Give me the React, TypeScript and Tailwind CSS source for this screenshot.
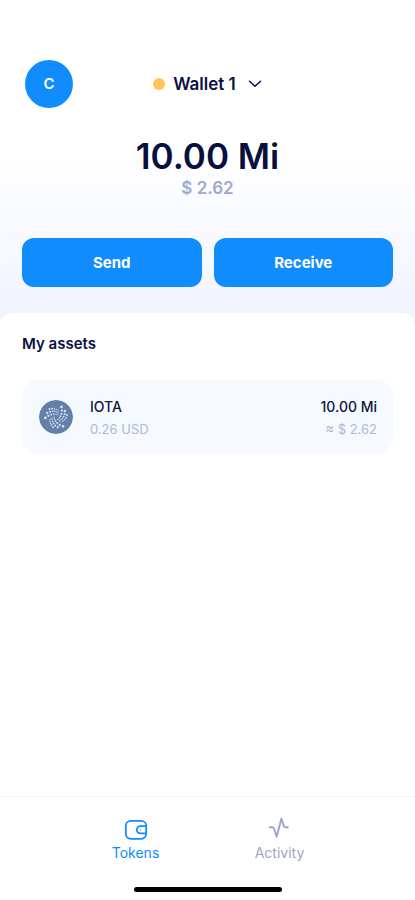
import React, { useState } from 'react';
import { SiIota } from 'react-icons/si';

type Tab = 'tokens' | 'activity';

interface Asset {
  name: string;
  price: string;
  amount: string;
  value: string;
}

const assets: Asset[] = [
  { name: 'IOTA', price: '0.26 USD', amount: '10.00 Mi', value: '≈ $ 2.62' },
];

const ChevronIcon: React.FC = () => (
  <svg width="14" height="8" viewBox="0 0 14 8" fill="none" aria-hidden="true">
    <path d="M1.5 1.2 7 6.3l5.5-5.1" stroke="currentColor" strokeWidth="1.5" strokeLinecap="round" strokeLinejoin="round" />
  </svg>
);

const WalletIcon: React.FC = () => (
  <svg width="24" height="24" viewBox="0 0 24 24" fill="none" stroke="currentColor" strokeWidth="1.8" strokeLinejoin="round" aria-hidden="true">
    <rect x="1.8" y="3.8" width="20.4" height="18" rx="5" />
    <path d="M22 9.2h-5.6a3.6 3.6 0 0 0 0 7.2H22" />
    <path d="M16.3 12.8h.5" strokeLinecap="round" strokeWidth="1" />
  </svg>
);

const ActivityIcon: React.FC = () => (
  <svg width="24" height="24" viewBox="0 0 24 24" fill="none" stroke="currentColor" strokeWidth="1.9" strokeLinecap="round" strokeLinejoin="round" aria-hidden="true">
    <path d="M1.8 10.3h2.5c.9 0 1.4.4 1.7 1.2l2.7 8.3 4.7-18.200 2.500 7.500c.3.8.9 1.200 1.700 1.200h2.200" />
  </svg>
);

const AssetRow: React.FC<{ asset: Asset }> = ({ asset }) => (
  <li className="flex items-center rounded-2xl bg-[#f6faff] px-4 py-[15px]">
    <span className="flex size-9 shrink-0 items-center justify-center rounded-full border border-[#f6faff] bg-[#6480aa] bg-clip-padding text-[#d9e3f3]">
      <SiIota size={24} aria-hidden="true" />
    </span>
    <div className="ml-4 flex-1">
      <p className="text-sm leading-6 font-medium text-[#10163c]">{asset.name}</p>
      <p className="text-[13px] leading-5 text-[#acb7d6]">{asset.price}</p>
    </div>
    <div className="text-right">
      <p className="text-sm leading-6 font-medium text-[#10163c]">{asset.amount}</p>
      <p className="text-[13px] leading-5 text-[#acb7d6]">{asset.value}</p>
    </div>
  </li>
);

export default function App() {
  const [tab, setTab] = useState<Tab>('tokens');

  const tabClass = (name: Tab) =>
    `flex w-18 flex-col items-center ${tab === name ? 'text-[#108cff]' : 'text-[#99a5ca]'}`;

  return (
    <div className="flex min-h-screen flex-col bg-white font-['Inter',sans-serif] text-[#08103f]">
      <div className="bg-linear-to-b from-white from-50% to-[#f0f4ff]">
        <header className="grid grid-cols-[48px_1fr_48px] items-center px-[25px] pt-[60px]">
          <button type="button" aria-label="Profile" className="size-12 rounded-full bg-[#108cff] text-[15px] font-semibold text-white">
            C
          </button>
          <button type="button" className="flex items-center justify-center text-[17px] leading-6 font-semibold">
            <span className="mr-2 size-3 rounded-full bg-[#ffc55a]" />
            Wallet 1
            <span className="ml-3">
              <ChevronIcon />
            </span>
          </button>
        </header>

        <div className="pt-7 text-center">
          <h1 className="text-[35px] leading-10 font-semibold">10.00 Mi</h1>
          <p className="text-[17px] leading-6 font-semibold text-[#9caad0]">$ 2.62</p>
        </div>

        <div className="grid grid-cols-2 gap-3 px-[22px] pt-[38px] pb-[26px]">
          <button type="button" className="h-[49px] rounded-xl bg-[#108cff] pt-px text-[15px] font-bold text-white">
            Send
          </button>
          <button type="button" className="h-[49px] rounded-xl bg-[#108cff] pt-px text-[15px] font-bold text-white">
            Receive
          </button>
        </div>
      </div>

      <div className="flex flex-1 flex-col bg-[#f0f4ff]">
        <main className="flex-1 rounded-t-xl bg-white px-[22px] pt-[21px]">
          <h2 className="text-[15px] leading-5 font-semibold">My assets</h2>
          <ul className="mt-[26px]">
            {assets.map((asset) => (
              <AssetRow key={asset.name} asset={asset} />
            ))}
          </ul>
        </main>
      </div>

      <footer className="border-t border-[#f4f4f6] bg-white pt-5 pb-2">
        <nav className="flex justify-center gap-18">
          <button type="button" className={tabClass('tokens')} onClick={() => setTab('tokens')}>
            <WalletIcon />
            <span className="mt-0.5 text-sm leading-5">Tokens</span>
          </button>
          <button type="button" className={tabClass('activity')} onClick={() => setTab('activity')}>
            <ActivityIcon />
            <span className="mt-0.5 text-sm leading-5">Activity</span>
          </button>
        </nav>
        <div className="mx-auto mt-6 h-[5px] w-[148px] rounded-full bg-black" />
      </footer>
    </div>
  );
}
